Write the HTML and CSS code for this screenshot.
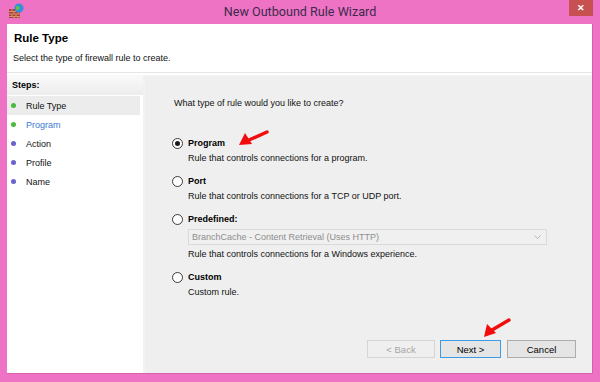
FILE: index.html
```html
<!DOCTYPE html>
<html lang="en">
<head>
    <meta charset="UTF-8">
    <title>New Outbound Rule Wizard</title>
    <link rel="stylesheet" href="styles.css">
</head>
<body>
<div class="window">
    <div class="title-bar">
        <svg class="title-icon" width="16" height="16" viewBox="0 0 16 16">
            <rect x="1" y="6" width="11" height="9" fill="#a5432f"/>
            <path d="M1 8.5h11M1 11h11M1 13.5h11M4 6v2.5M8 6v2.5M6 8.5v2.5M10 8.5v2.5M4 11v2.5M8 11v2.5M6 13.5v1.5M10 13.5v1.5" stroke="#e3a08c" stroke-width="0.8"/>
            <circle cx="11" cy="5" r="4.5" fill="#2f8fe0"/>
            <path d="M8 3.5c1-1 2-1 3 0s1 2 0 3-2 1-3 0M12 2c1 0 2 1 2 2" fill="#5cc24a"/>
        </svg>
        <span class="title-text">New Outbound Rule Wizard</span>
        <span class="close-btn">&#x2715;</span>
    </div>
    <div class="client">
        <header class="wizard-header">
            <h1 class="wizard-title">Rule Type</h1>
            <p class="wizard-subtitle">Select the type of firewall rule to create.</p>
        </header>
        <div class="wizard-body">
            <aside class="steps">
                <div class="steps-header">Steps:</div>
                <ul class="step-list">
                    <li class="step done current"><span class="dot"></span>Rule Type</li>
                    <li class="step done link"><span class="dot"></span>Program</li>
                    <li class="step"><span class="dot"></span>Action</li>
                    <li class="step"><span class="dot"></span>Profile</li>
                    <li class="step"><span class="dot"></span>Name</li>
                </ul>
            </aside>
            <section class="page">
                <p class="question">What type of rule would you like to create?</p>
                <div class="options">
                    <div class="option">
                        <div class="option-row"><span class="radio checked"></span><span class="option-label">Program</span></div>
                        <p class="option-desc">Rule that controls connections for a program.</p>
                    </div>
                    <div class="option">
                        <div class="option-row"><span class="radio"></span><span class="option-label">Port</span></div>
                        <p class="option-desc">Rule that controls connections for a TCP or UDP port.</p>
                    </div>
                    <div class="option">
                        <div class="option-row"><span class="radio"></span><span class="option-label">Predefined:</span></div>
                        <div class="select">
                            <span>BranchCache - Content Retrieval (Uses HTTP)</span>
                            <svg width="7" height="5" viewBox="0 0 7 5"><path d="M0.5 0.5L3.5 3.5 6.5 0.5" fill="none" stroke="#b4b4b4"/></svg>
                        </div>
                        <p class="option-desc">Rule that controls connections for a Windows experience.</p>
                    </div>
                    <div class="option">
                        <div class="option-row"><span class="radio"></span><span class="option-label">Custom</span></div>
                        <p class="option-desc">Custom rule.</p>
                    </div>
                </div>
                <div class="buttons">
                    <button class="btn back" disabled>&lt; Back</button>
                    <button class="btn default">Next &gt;</button>
                    <button class="btn cancel">Cancel</button>
                </div>
            </section>
        </div>
    </div>
    <svg class="arrow arrow-program" width="30" height="17" viewBox="0 0 30 17">
        <path d="M28 2L10 10" stroke="#f20d0d" stroke-width="3.4" stroke-linecap="round"/>
        <path d="M0 15L6 3 13 14Z" fill="#f20d0d"/>
    </svg>
    <svg class="arrow arrow-next" width="28" height="20" viewBox="0 0 28 20">
        <path d="M26 2L9 12" stroke="#f20d0d" stroke-width="3.4" stroke-linecap="round"/>
        <path d="M1 19L4 6 13 15Z" fill="#f20d0d"/>
    </svg>
</div>
</body>
</html>
```

FILE: styles.css
```css
body {
    margin: 0;
    font-family: "Liberation Sans", Arial, sans-serif;
    font-size: 9px;
    line-height: 12px;
    color: #111;
}

p {
    margin: 0;
}

.window {
    position: relative;
    box-sizing: border-box;
    width: 600px;
    height: 382px;
    background: #ef73c5;
    padding: 0 7px 8px 7px;
    display: flex;
    flex-direction: column;
}

.title-bar {
    height: 24px;
    display: flex;
    align-items: center;
    position: relative;
}

.title-icon {
    position: absolute;
    left: 1px;
    top: 3px;
}

.title-text {
    flex: 1;
    text-align: center;
    font-family: Roboto, "Liberation Sans", sans-serif;
    font-size: 12.6px;
    color: #3b2a4b;
    margin-top: -1px;
}

.close-btn {
    position: absolute;
    right: 0;
    top: 0;
    width: 24px;
    height: 16px;
    background: #c75050;
    color: #fff;
    font-size: 9px;
    font-weight: bold;
    line-height: 16px;
    text-align: center;
}

.client {
    flex: 1;
    background: #fff;
    display: flex;
    flex-direction: column;
    border-right: 1px solid #d85eae;
    border-bottom: 1px solid #d85eae;
}

.wizard-header {
    height: 49px;
    box-sizing: border-box;
    padding: 7px 6px 0 6px;
    border-bottom: 1px solid #e6e6e6;
}

.wizard-title {
    margin: 0 0 0 1px;
    font-size: 11.5px;
    line-height: 15px;
    font-weight: bold;
    color: #000;
}

.wizard-subtitle {
    margin-top: 6px;
}

.wizard-body {
    flex: 1;
    display: flex;
    margin-top: 2px;
}

.steps {
    width: 136px;
    border-right: 2px solid #f2f2f2;
}

.steps-header {
    height: 20px;
    line-height: 20px;
    padding-left: 5px;
    background: linear-gradient(#fafafa, #ececec);
    font-weight: bold;
    color: #000;
    border-bottom: 1px solid #fff;
}

.step-list {
    list-style: none;
    margin: 0;
    padding: 0;
}

.step {
    height: 19px;
    display: flex;
    align-items: center;
    padding-left: 4px;
    margin-right: 3px;
}

.step.current {
    background: #ececec;
}

.step.link {
    color: #3c79d6;
}

.dot {
    width: 5px;
    height: 5px;
    border-radius: 50%;
    background: #6a63c9;
    margin-right: 10px;
}

.step.done .dot {
    background: #4cba3c;
}

.page {
    flex: 1;
    background: #efefef;
    border-top: 1px solid #f6f6f6;
    display: flex;
    flex-direction: column;
    padding: 21px 0 0 29px;
}

.question {
    margin-bottom: 28px;
}

.options {
    display: flex;
    flex-direction: column;
    gap: 11px;
    margin-left: -2px;
    margin-right: 45px;
}

.option-row {
    display: flex;
    align-items: center;
    height: 12px;
}

.radio {
    box-sizing: border-box;
    width: 11px;
    height: 11px;
    border-radius: 50%;
    border: 1px solid #3a3a3a;
    background: #fff;
    margin-right: 5px;
    display: flex;
    align-items: center;
    justify-content: center;
}

.radio.checked::after {
    content: "";
    width: 5px;
    height: 5px;
    border-radius: 50%;
    background: #1a1a1a;
}

.option-label {
    font-weight: bold;
    color: #000;
}

.option-desc {
    margin: 3px 0 0 16px;
}

.select {
    margin: 4px 0 0 16px;
    height: 16px;
    box-sizing: border-box;
    border: 1px solid #dadada;
    background: #f0f0f0;
    color: #8e8e8e;
    display: flex;
    align-items: center;
    justify-content: space-between;
    padding: 0 5px 0 3px;
}

.buttons {
    margin-top: auto;
    margin-bottom: 15px;
    display: flex;
    justify-content: flex-end;
    padding-right: 16px;
    gap: 5px;
}

.btn {
    font-family: "Liberation Sans", Arial, sans-serif;
    font-size: 9.5px;
    width: 68px;
    height: 18px;
    padding: 0;
    border: 1px solid #adadad;
    background: #e5e5e5;
    color: #000;
}

.btn.default {
    width: 61px;
    border-color: #3c9ae6;
}

.btn.cancel {
    width: 69px;
    margin-left: 1px;
}

.btn:disabled {
    color: #a6a6a6;
    border-color: #d5d5d5;
    background: #efefef;
}

.arrow {
    position: absolute;
}

.arrow-program {
    left: 239px;
    top: 130px;
}

.arrow-next {
    left: 483px;
    top: 318px;
}
```
